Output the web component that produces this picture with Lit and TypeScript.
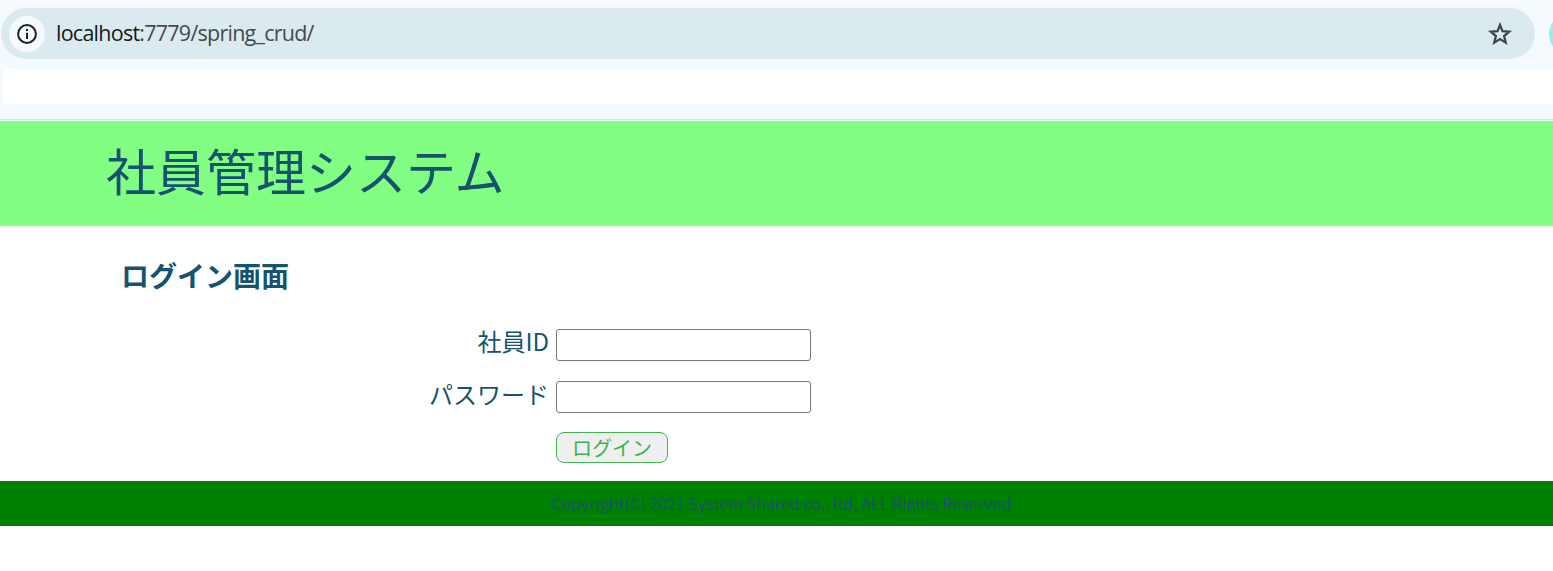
import { LitElement, html, css } from "lit";
import { customElement } from "lit/decorators.js";

@customElement("browser-bar")
class BrowserBar extends LitElement {
  static styles = css`
    :host { display: block; height: 121px; box-sizing: border-box; padding-top: 8px; background: #f4fafd; overflow: hidden; }
    .row { display: flex; align-items: center; height: 51px; padding-left: 1px; }
    .pill { flex: none; box-sizing: border-box; width: 1534px; height: 51px; border-radius: 26px; background: #dbeaef; display: flex; align-items: center; padding: 0 23px 0 8px; }
    .info { width: 36px; height: 36px; border-radius: 50%; background: #f4fafd; display: grid; place-items: center; }
    .url { flex: 1; margin-left: 11px; padding-bottom: 2px; font: 21.5px/30px "Open Sans", sans-serif; letter-spacing: -0.75px; color: #454a4d; white-space: nowrap; }
    .host { color: #15191b; }
    .avatar { flex: none; width: 42px; height: 42px; margin-left: 14px; border-radius: 50%; background: #8ceffc; }
    .bookmarks { height: 35px; margin: 10px 0 0 3px; background: #fff; }
    .line { height: 1px; margin-top: 15px; background: #d9dfe2; }
    svg { display: block; }
  `;
  render() {
    return html`
      <div class="row">
        <div class="pill">
          <div class="info">
            <svg width="20" height="20" viewBox="0 0 20 20">
              <circle cx="10" cy="10" r="8.9" fill="none" stroke="#1b2023" stroke-width="2" />
              <path d="M9 5h2v2H9zM9 8.8h2v6.2H9z" fill="#1b2023" />
            </svg>
          </div>
          <div class="url"><span class="host">localhost</span>:7779/spring_crud/</div>
          <svg width="24" height="24" viewBox="0 0 24 24">
            <path d="M12 3L14.5 9.2L21.2 9.7L16.1 14L17.7 20.6L12 17L6.3 20.6L7.9 14L2.8 9.7L9.5 9.2Z" fill="none" stroke="#40484c" stroke-width="2.3" />
          </svg>
        </div>
        <div class="avatar"></div>
      </div>
      <div class="bookmarks"></div>
      <div class="line"></div>
    `;
  }
}

@customElement("app-root")
class AppRoot extends LitElement {
  static styles = css`
    :host { display: block; height: 571px; overflow: hidden; background: #fff; color: #15536f; font-family: "Noto Sans CJK JP", sans-serif; }
    .header { box-sizing: border-box; height: 105px; padding: 12px 0 0 106px; background: #82ff82; font-size: 50px; line-height: 72px; }
    .main { box-sizing: border-box; height: 255px; padding-top: 29px; }
    .title { margin: 0 0 0 121px; font-size: 28px; line-height: 40px; font-weight: 700; }
    .form { display: grid; grid-template-columns: 549px 255px; column-gap: 7px; grid-template-rows: 32px 32px 31px; row-gap: 20px; margin-top: 34px; }
    .label { text-align: right; font-size: 24px; line-height: 26px; white-space: nowrap; }
    .label.id { line-height: 24px; }
    .field { box-sizing: border-box; width: 255px; height: 32px; margin: 0; padding: 1px 4px; border: 1px solid #767676; border-radius: 3px; background: #fff; font: inherit; font-size: 20px; outline: none; }
    .button { grid-column: 2; justify-self: start; box-sizing: border-box; width: 112px; height: 31px; margin-top: -1px; padding: 1px 0 0; border: 1px solid #39b54a; border-radius: 8px; background: #efefef; color: #39b54a; font: inherit; font-size: 20px; line-height: 28px; }
    .footer { height: 45px; padding-left: 9px; background: #008000; text-align: center; font-size: 16px; line-height: 45px; }
  `;
  render() {
    return html`
      <browser-bar></browser-bar>
      <div class="header">社員管理システム</div>
      <div class="main">
        <h2 class="title">ログイン画面</h2>
        <div class="form">
          <label class="label id" for="uid">社員ID</label>
          <input class="field" id="uid" type="text" />
          <label class="label" for="pw">パスワード</label>
          <input class="field" id="pw" type="password" />
          <button class="button" type="button">ログイン</button>
        </div>
      </div>
      <div class="footer">Copyright(C) 2021 System Shared co., ltd, ALL Rights Reserved</div>
    `;
  }
}
